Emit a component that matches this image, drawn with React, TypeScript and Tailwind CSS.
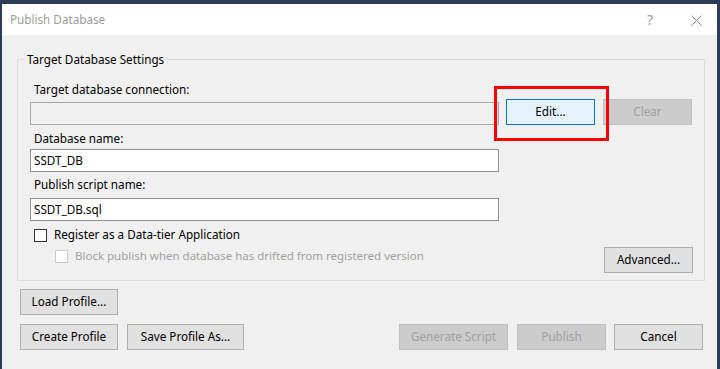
const font = { fontFamily: '"Noto Sans", "Open Sans", sans-serif' };

type BtnProps = {
  label: string;
  w: string;
  disabled?: boolean;
  className?: string;
};

const Btn = ({ label, w, disabled, className = "" }: BtnProps) => (
  <button
    className={`${w} h-[26px] border text-[11.7px] leading-none flex items-center justify-center ${
      disabled
        ? "bg-[#cccccc] border-[#bfbfbf] text-[#a0a0a0]"
        : "bg-[#e1e1e1] border-[#adadad] text-black"
    } ${className}`}
  >
    {label}
  </button>
);

const Field = ({ value, disabled }: { value?: string; disabled?: boolean }) => (
  <div
    className={`w-[469px] h-[23px] border border-[#8f8f8f] flex items-center pl-[3px] text-[11.7px] text-black ${
      disabled ? "bg-[#f0f0f0] border-[#a8a8a8]" : "bg-white"
    }`}
  >
    {value}
  </div>
);

export default function App() {
  return (
    <div
      className="w-[720px] h-[369px] overflow-hidden bg-[#2c3b57] pt-[4px] pl-[2px] pr-[3px]"
      style={font}
    >
      <div className="h-full bg-[#f0f0f0] flex flex-col">
        {/* title bar */}
        <div className="h-[31px] bg-white flex items-center pl-[8px] pr-[15px] shrink-0">
          <span className="text-[11.7px] text-[#9a9a9a]">Publish Database</span>
          <span className="ml-auto text-[14px] text-[#9a9a9a] mr-[38px]">?</span>
          <svg width="11" height="11" viewBox="0 0 11 11" className="mt-[1px]">
            <path d="M0.5 0.5 L10.5 10.5 M10.5 0.5 L0.5 10.5" stroke="#8a8a8a" strokeWidth="1" />
          </svg>
        </div>

        {/* group box */}
        <div className="relative mt-[24px] ml-[15px] w-[688px] h-[222px] border border-[#dcdcdc] pl-[12px] pr-[11px] pt-[21px] shrink-0">
          <span className="absolute -top-[9px] left-[7px] bg-[#f0f0f0] px-[2px] text-[11.7px] leading-[16px] text-black">
            Target Database Settings
          </span>

          <div className="ml-[4px] text-[11.7px] leading-[16px] h-[16px] text-black">
            Target database connection:
          </div>
          <div className="mt-[2px] flex items-end h-[26px]">
            <Field disabled />
            <div className="relative ml-[7px]">
              <button className="w-[89px] h-[26px] bg-[#e5f1fb] border border-[#0078d7] text-[11.7px] text-black flex items-center justify-center">
                Edit...
              </button>
              <div className="absolute -left-[12px] -top-[13px] w-[115px] h-[55px] border-[3px] border-[#ff0000] pointer-events-none" />
            </div>
            <Btn label="Clear" w="w-[89px]" disabled className="ml-[8px] h-[25px]" />
          </div>

          <div className="mt-[5px] ml-[4px] text-[11.7px] leading-[16px] h-[16px] text-black">
            Database name:
          </div>
          <div className="mt-[3px]">
            <Field value="SSDT_DB" />
          </div>

          <div className="mt-[4px] ml-[4px] text-[11.7px] leading-[16px] h-[16px] text-black">
            Publish script name:
          </div>
          <div className="mt-[6px]">
            <Field value="SSDT_DB.sql" />
          </div>

          <div className="mt-[6px] ml-[4px] flex items-center h-[16px] gap-[7px]">
            <span className="w-[13px] h-[13px] border border-[#333333] bg-white shrink-0" />
            <span className="text-[11.7px] text-black">Register as a Data-tier Application</span>
          </div>

          <div className="mt-[4px] flex items-start justify-between h-[26px]">
            <div className="ml-[25px] mt-[1px] flex items-center h-[16px] gap-[7px]">
              <span className="w-[13px] h-[13px] border border-[#cccccc] bg-white shrink-0" />
              <span className="text-[11.5px] text-[#a0a0a0]">
                Block publish when database has drifted from registered version
              </span>
            </div>
            <Btn label="Advanced..." w="w-[89px]" />
          </div>
        </div>

        {/* bottom buttons */}
        <div className="mt-[8px] ml-[18px]">
          <Btn label="Load Profile..." w="w-[98px]" />
        </div>
        <div className="mt-[9px] ml-[18px] flex">
          <Btn label="Create Profile" w="w-[98px]" />
          <Btn label="Save Profile As..." w="w-[117px]" className="ml-[9px]" />
          <Btn label="Generate Script" w="w-[109px]" disabled className="ml-[155px]" />
          <Btn label="Publish" w="w-[89px]" disabled className="ml-[9px]" />
          <Btn label="Cancel" w="w-[89px]" className="ml-[8px]" />
        </div>
      </div>
    </div>
  );
}
